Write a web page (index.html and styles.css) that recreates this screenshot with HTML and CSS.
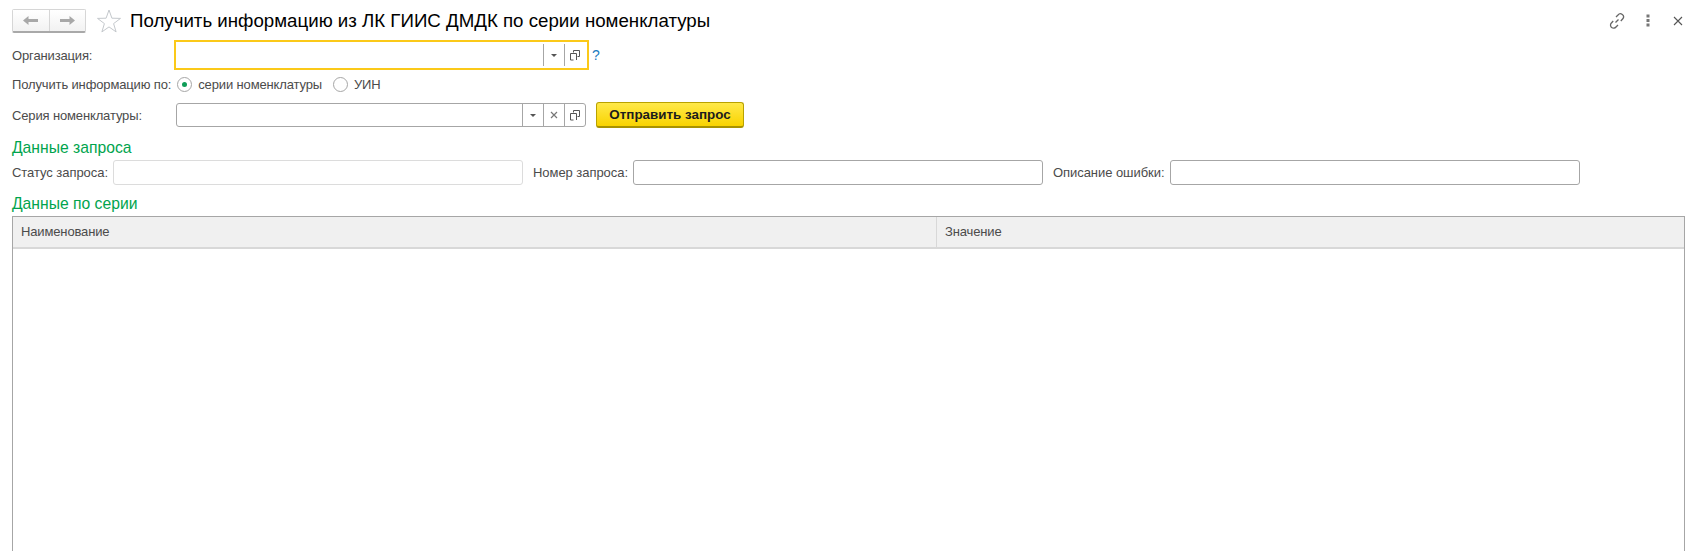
FILE: index.html
```html
<!DOCTYPE html>
<html lang="ru">
<head>
    <meta charset="UTF-8">
    <title>Получить информацию из ЛК ГИИС ДМДК по серии номенклатуры</title>
    <link rel="stylesheet" href="styles.css">
</head>
<body>
    <div class="form">
        <div class="title-bar">
            <div class="nav-group">
                <button class="nav-btn">
                    <svg width="15" height="11" viewBox="0 0 15 11"><path d="M0 5.500L5.500 1v3H15v3H5.500v3z" fill="#a8a8a8"/></svg>
                </button>
                <button class="nav-btn">
                    <svg width="15" height="11" viewBox="0 0 15 11"><path d="M15 5.500L9.500 1v3H0v3h9.500v3z" fill="#a8a8a8"/></svg>
                </button>
            </div>
            <svg class="star" width="24" height="24" viewBox="0 0 24 24"><path d="M12 1l2.900 8.200 8.600.2-6.900 5.200 2.500 8.300L12 17.900l-7.100 5 2.500-8.300L.5 9.400l8.600-.2z" fill="#fff" stroke="#c4c8cc"/></svg>
            <h1 class="form-title">Получить информацию из ЛК ГИИС ДМДК по серии номенклатуры</h1>
            <div class="title-actions">
                <svg class="action-link" width="18" height="18" viewBox="0 0 18 18" fill="none" stroke="#666" stroke-width="1.300"><path d="M7.500 10.500l3-3M8 5l2-2a3 3 0 0 1 4.800 3.800L12.800 9M10 13l-2 2a3 3 0 0 1-4.800-3.800L5.200 9"/></svg>
                <svg class="action-more" width="4" height="13" viewBox="0 0 4 13" fill="#777"><rect x=".5" y=".5" width="3" height="3"/><rect x=".5" y="5" width="3" height="3"/><rect x=".5" y="9.500" width="3" height="3"/></svg>
                <svg width="10" height="10" viewBox="0 0 10 10" stroke="#555" stroke-width="1.100"><path d="M1 1l8 8M9 1l-8 8"/></svg>
            </div>
        </div>

        <div class="row row-org">
            <label class="label label-main">Организация:</label>
            <div class="field field-focus">
                <div class="field-input"></div>
                <div class="field-btn"><span class="caret"></span></div>
                <div class="field-btn"><svg width="10" height="11" viewBox="0 0 10 11" fill="none" stroke="#555"><path d="M3.500 2.500V.5h6v6H7.500M.5 3.500h6v6.500M.5 3.500V10M.5 10h3"/></svg></div>
            </div>
            <span class="help">?</span>
        </div>

        <div class="row row-radio">
            <label class="label">Получить информацию по:</label>
            <span class="radio radio-on"></span>
            <span class="radio-text">серии номенклатуры</span>
            <span class="radio"></span>
            <span class="radio-text">УИН</span>
        </div>

        <div class="row row-series">
            <label class="label label-series">Серия номенклатуры:</label>
            <div class="field field-series">
                <div class="field-input"></div>
                <div class="field-btn"><span class="caret"></span></div>
                <div class="field-btn"><svg width="8" height="8" viewBox="0 0 8 8" stroke="#777" stroke-width="1.200"><path d="M1 1l6 6M7 1L1 7"/></svg></div>
                <div class="field-btn"><svg width="10" height="11" viewBox="0 0 10 11" fill="none" stroke="#555"><path d="M3.500 2.500V.5h6v6H7.500M.5 3.500h6v6.500M.5 3.500V10M.5 10h3"/></svg></div>
            </div>
            <button class="send-btn">Отправить запрос</button>
        </div>

        <h2 class="group-title">Данные запроса</h2>
        <div class="row row-request">
            <label class="label">Статус запроса:</label>
            <div class="text-box text-box-off"></div>
            <label class="label">Номер запроса:</label>
            <div class="text-box"></div>
            <label class="label">Описание ошибки:</label>
            <div class="text-box"></div>
        </div>

        <h2 class="group-title group-title-series">Данные по серии</h2>
        <div class="grid">
            <div class="grid-head">
                <div class="grid-col grid-col-name">Наименование</div>
                <div class="grid-col grid-col-value">Значение</div>
            </div>
        </div>
    </div>
</body>
</html>
```

FILE: styles.css
```css
html, body {
    height: 100%;
}

body {
    margin: 0;
    overflow: hidden;
    background-color: #fff;
    font-family: "Liberation Sans", Arial, sans-serif;
    font-size: 13px;
    letter-spacing: -0.14px;
    color: #4b4b4b;
}

.form {
    display: flex;
    flex-direction: column;
    height: 100%;
    padding: 0 19px 0 12px;
    box-sizing: border-box;
}

.title-bar {
    display: flex;
    align-items: center;
    height: 40px;
    padding-top: 1px;
    box-sizing: border-box;
}

.nav-group {
    display: flex;
    width: 74px;
    height: 24px;
    box-sizing: border-box;
    border: 1px solid #d6d6d6;
    border-bottom: 2px solid #a9a9a9;
    border-radius: 2px;
}

.nav-btn {
    flex: 1;
    display: flex;
    align-items: center;
    justify-content: center;
    padding: 0;
    border: 0;
    background: linear-gradient(#fff, #f2f2f2);
}

.nav-btn + .nav-btn {
    border-left: 1px solid #d6d6d6;
}

.star {
    margin-left: 11px;
}

.form-title {
    margin: 0 0 0 9px;
    font-size: 18.7px;
    font-weight: normal;
    letter-spacing: 0;
    color: #000;
}

.title-actions {
    display: flex;
    align-items: center;
    margin-left: auto;
    margin-right: 2px;
}

.action-link {
    margin-right: 20px;
}

.action-more {
    margin-right: 23px;
}

.row {
    display: flex;
    align-items: center;
}

.row-org {
    height: 30px;
}

.row-radio {
    height: 22px;
    margin-top: 3px;
}

.row-series {
    height: 26px;
    margin-top: 7px;
}

.row-request {
    height: 24px;
    margin-top: 4px;
    letter-spacing: -0.05px;
}

.label {
    white-space: nowrap;
}

.label-main {
    width: 162px;
}

.label-series {
    width: 164px;
}

.field {
    display: flex;
    box-sizing: border-box;
    background-color: #fff;
}

.field-focus {
    width: 415px;
    height: 30px;
    border: 2px solid #fbc919;
    padding: 2px 2px 2px 0;
}

.field-series {
    width: 410px;
    height: 24px;
    border: 1px solid #a6a6a6;
    border-radius: 3px;
}

.field-input {
    flex: 1;
}

.field-btn {
    display: flex;
    align-items: center;
    justify-content: center;
    width: 21px;
    box-sizing: border-box;
    border-left: 1px solid #a6a6a6;
}

.caret {
    width: 0;
    height: 0;
    border-left: 3px solid transparent;
    border-right: 3px solid transparent;
    border-top: 3px solid #555;
}

.help {
    margin-left: 3px;
    font-size: 14px;
    color: #1a7cc0;
}

.radio {
    display: flex;
    align-items: center;
    justify-content: center;
    width: 15px;
    height: 15px;
    margin-left: 6px;
    box-sizing: border-box;
    border: 1px solid #a6a6a6;
    border-radius: 50%;
}

.radio-on::after {
    content: "";
    width: 5px;
    height: 5px;
    border-radius: 50%;
    background-color: #0f9d58;
}

.radio-text {
    margin-left: 6px;
    margin-right: 5px;
}

.send-btn {
    width: 148px;
    height: 26px;
    margin-left: 10px;
    padding: 0;
    box-sizing: border-box;
    border: 1px solid #b9a200;
    border-bottom: 2px solid #a89200;
    border-radius: 3px;
    background: linear-gradient(#ffe94a, #f9d300);
    font-family: inherit;
    font-size: 13.4px;
    font-weight: bold;
    letter-spacing: 0;
    color: #1c1c1c;
}

.group-title {
    margin: 11px 0 0;
    font-size: 15.7px;
    line-height: 17px;
    font-weight: normal;
    letter-spacing: 0;
    color: #00a44d;
}

.group-title-series {
    margin-top: 11px;
}

.text-box {
    width: 410px;
    height: 25px;
    margin: 0 10px 0 5px;
    box-sizing: border-box;
    border: 1px solid #a6a6a6;
    border-radius: 3px;
}

.text-box-off {
    border-color: #dcdcdc;
}

.grid {
    flex: 1;
    margin-top: 4px;
    border: 1px solid #a6a6a6;
    border-bottom: 0;
}

.grid-head {
    display: flex;
    height: 32px;
    box-sizing: border-box;
    border-bottom: 2px solid #d8d8d8;
    background-color: #f0f0f0;
}

.grid-col {
    display: flex;
    align-items: center;
    padding: 0 0 2px 8px;
    box-sizing: border-box;
}

.grid-col-name {
    width: 923px;
}

.grid-col-value {
    flex: 1;
    border-left: 1px solid #d8d8d8;
}
```
